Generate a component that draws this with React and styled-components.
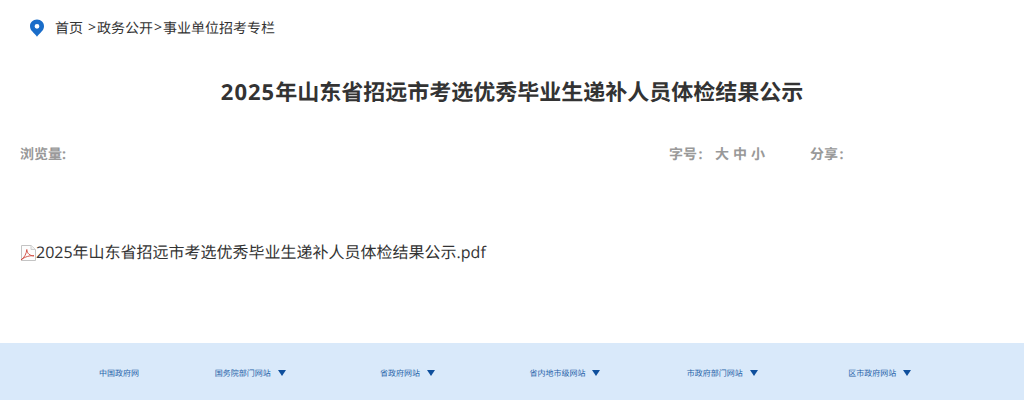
import React from "react";
import styled, { createGlobalStyle } from "styled-components";

const FONT = `"Open Sans", "Noto Sans CJK SC", sans-serif`;

const Global = createGlobalStyle`
  html, body { margin: 0; padding: 0; background: #fff; }
  body { font-family: ${FONT}; width: 1024px; height: 400px; overflow: hidden; text-rendering: geometricPrecision; }
`;

const Page = styled.div`
  display: flex;
  flex-direction: column;
  height: 400px;
`;

const Breadcrumb = styled.nav`
  display: flex;
  align-items: center;
  height: 55px;
  padding-left: 29px;
  font-size: 14px;
  color: #333;
  white-space: pre;
`;

const Sep = styled.span`
  display: inline-block;
  width: 10px;
  text-align: center;
`;

const Gap = styled.span`
  display: inline-block;
  width: 4px;
`;

const PinIcon = styled.svg`
  width: 16px;
  height: 18px;
  margin-right: 10px;
  margin-top: 1px;
  flex: none;
`;

const Title = styled.h1`
  margin: 17px 0 0;
  height: 40px;
  line-height: 40px;
  text-align: center;
  font-size: 22px;
  font-weight: 700;
  color: #333;
`;

const Digits = styled.span`
  letter-spacing: 1px;
`;

const Meta = styled.div`
  display: flex;
  align-items: center;
  height: 30px;
  margin-top: 27px;
  padding-left: 20px;
  font-size: 14px;
  font-weight: 700;
  color: #999;
`;

const Views = styled.span`
  width: 649px;
`;

const Label = styled.span`
  width: 46px;
`;

const Colon = styled.span`
  margin-left: 1.5px;
`;

const Sizes = styled.span`
  display: flex;
  gap: 4px;
  width: 95px;
`;

const Attachment = styled.div`
  display: flex;
  align-items: center;
  height: 30px;
  margin-top: 67px;
  padding-left: 20px;
  font-size: 16px;
  color: #333;
`;

const PdfIcon = styled.svg`
  width: 16px;
  height: 16px;
  margin-top: 3px;
  flex: none;
`;

const Footer = styled.footer`
  display: grid;
  grid-template-columns: 105px repeat(5, 157.4px);
  align-items: center;
  height: 57px;
  margin-top: auto;
  padding: 0 0 0 66.5px;
  background: #d9e9fa;
  font-size: 8px;
  color: #1f62a8;
`;

const FooterItem = styled.div`
  display: flex;
  align-items: center;
  justify-content: center;
  gap: 7px;
  padding-top: 3px;
  white-space: nowrap;
`;

const Arrow = styled.i`
  width: 0;
  height: 0;
  margin-top: -1px;
  border-left: 4.5px solid transparent;
  border-right: 4.5px solid transparent;
  border-top: 6px solid #0f4f9c;
`;

const links = [
  ["中国政府网", false],
  ["国务院部门网站", true],
  ["省政府网站", true],
  ["省内地市级网站", true],
  ["市政府部门网站", true],
  ["区市政府网站", true],
];

export default function App() {
  return (
    <Page>
      <Global />
      <Breadcrumb>
        <PinIcon viewBox="0 0 16 18">
          <path
            fillRule="evenodd"
            d="M8 0.5C3.9 0.5 1 3.5 1 7.2c0 2.2 1 3.8 2.4 5.4C5 14.4 7 16.4 8 17.8c1-1.4 3-3.4 4.6-5.2C14 11 15 9.4 15 7.2 15 3.5 12.1 0.5 8 0.5ZM8 4.9a2.4 2.4 0 1 1 0 4.8 2.4 2.4 0 0 1 0-4.8Z"
            fill="#1a6dc9"
          />
        </PinIcon>
        首页<Gap /><Sep>{">"}</Sep>政务公开<Sep>{">"}</Sep>事业单位招考专栏
      </Breadcrumb>
      <Title>
        <Digits>2025</Digits>年山东省招远市考选优秀毕业生递补人员体检结果公示
      </Title>
      <Meta>
        <Views>浏览量:</Views>
        <Label>字号<Colon>:</Colon></Label>
        <Sizes>
          <span>大</span>
          <span>中</span>
          <span>小</span>
        </Sizes>
        <span>分享<Colon>:</Colon></span>
      </Meta>
      <Attachment>
        <PdfIcon viewBox="0 0 16 16">
          <path d="M1.5 0.5H11L15.5 4.5V15.5H1.5Z" fill="#fdfdfd" stroke="#c4c4c4" />
          <path d="M11 0.5V4.5H15.5" fill="#f2f2f2" stroke="#d0d0d0" />
          <path
            d="M1 15C4.5 12.5 6.5 8.5 6.8 4.5 7 8.5 10 11 14 10.8 10 10.4 5 11.5 1 15Z"
            fill="none"
            stroke="#d0483d"
            strokeWidth="0.9"
          />
        </PdfIcon>
        2025年山东省招远市考选优秀毕业生递补人员体检结果公示.pdf
      </Attachment>
      <Footer>
        {links.map(([text, hasArrow]) => (
          <FooterItem key={text}>
            {text}
            {hasArrow && <Arrow />}
          </FooterItem>
        ))}
      </Footer>
    </Page>
  );
}
